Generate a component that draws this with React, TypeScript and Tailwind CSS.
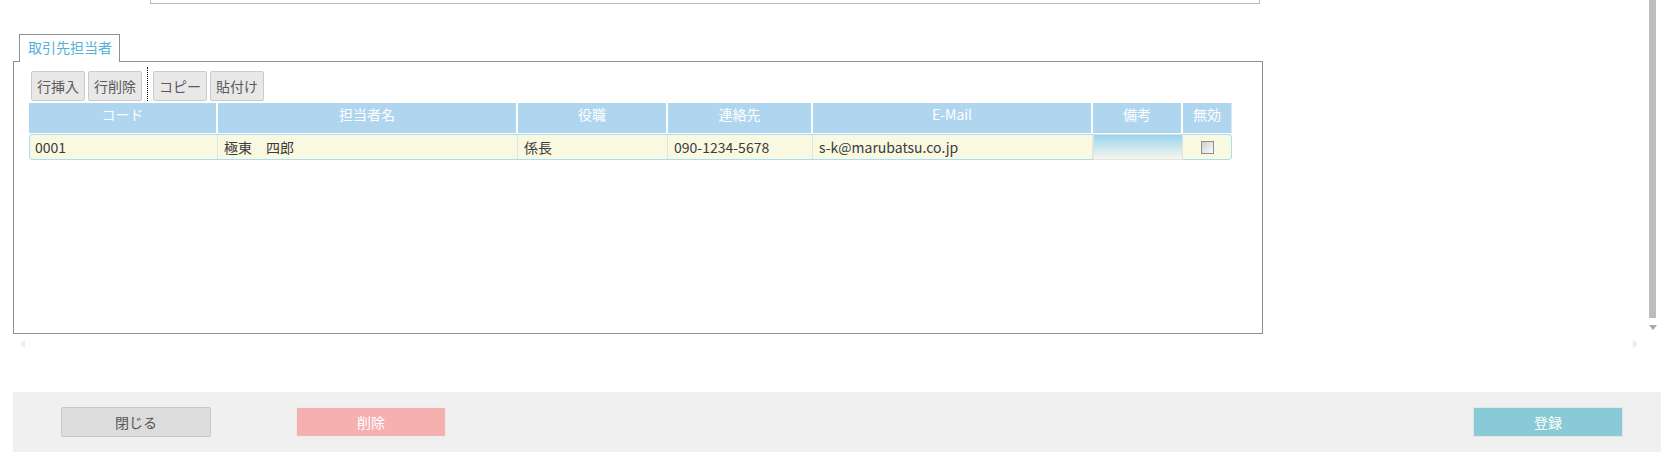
const columns = [
  { label: "コード", head: "w-[189px]", cell: "w-[188px] pl-[5px] border-r border-[#e3e6dc]", value: "0001" },
  { label: "担当者名", head: "w-[300px]", cell: "w-[300px] pl-[6px] border-r border-[#e3e6dc]", value: "極東　四郎" },
  { label: "役職", head: "w-[150px]", cell: "w-[150px] pl-[6px] border-r border-[#e3e6dc]", value: "係長" },
  { label: "連絡先", head: "w-[145px]", cell: "w-[145px] pl-[6px] border-r border-[#e3e6dc]", value: "090-1234-5678" },
  { label: "E-Mail", head: "w-[280px]", cell: "w-[280px] pl-[6px] border-r border-[#e3e6dc]", value: "s-k@marubatsu.co.jp" },
];

function ToolButton({ label }: { label: string }) {
  return (
    <button className="w-[54px] h-[30px] bg-[#e8e8e8] border border-[#cbcbcb] rounded-[2px] text-[14px] leading-[20px] text-[#5a5a5a]">
      {label}
    </button>
  );
}

function FooterButton({ label, className }: { label: string; className: string }) {
  return (
    <button className={"w-[150px] h-[30px] border text-[14px] leading-[20px] " + className}>
      {label}
    </button>
  );
}

export default function App() {
  return (
    <div className="w-[1668px] h-[458px] bg-white overflow-hidden font-['Noto_Sans_CJK_JP',sans-serif] text-[#444]">
      <div className="flex h-[392px]">
        <div className="w-[1649px]">
          {/* bottom edge of the field above */}
          <div className="ml-[150px] w-[1110px] h-[4px] border-x border-b border-[#bcbcbc]" />

          <div className="ml-[13px] mt-[30px]">
            <div className="relative z-10 ml-[6px] -mb-[1px] w-[101px] h-[28px] bg-white border-t border-x border-[#8f8f97] pl-[8px] pt-[2px] text-[14px] leading-[20px] text-[#52b2d6]">
              取引先担当者
            </div>

            <div className="w-[1250px] h-[273px] border border-[#8f8f97] pl-[15px] pt-[5px]">
              <div className="flex items-end ml-[2px]">
                <div className="flex gap-[3px]">
                  <ToolButton label="行挿入" />
                  <ToolButton label="行削除" />
                </div>
                <div className="h-[34px] ml-[5px] mr-[5px] border-l border-dotted border-black" />
                <div className="flex gap-[3px]">
                  <ToolButton label="コピー" />
                  <ToolButton label="貼付け" />
                </div>
              </div>

              <div className="mt-[2px] flex h-[30px] bg-[#b0d5ef] w-[1203px] text-white text-[14px] leading-[20px]">
                {columns.map((c) => (
                  <div key={c.label} className={c.head + " border-r-2 border-white text-center pt-[1px]"}>
                    {c.label}
                  </div>
                ))}
                <div className="w-[90px] border-r-2 border-white text-center pt-[1px]">備考</div>
                <div className="w-[49px] border-r border-[#dde6ee] text-center pt-[1px]">無効</div>
              </div>

              <div className="mt-[1px] flex h-[26px] w-[1203px] border border-[#a7dff2] rounded-[3px] bg-[#f9f8e1] text-[14px] leading-[20px] text-[#3c3c3c]">
                {columns.map((c) => (
                  <div key={c.label} className={c.cell + " flex items-center"}>
                    {c.value}
                  </div>
                ))}
                <div className="w-[90px] -my-[1px] border-x border-y border-[#e2e2e2] bg-linear-to-b from-[#98d4f0] to-[#f7f7ea]" />
                <div className="w-[48px] flex items-center justify-center">
                  <div className="w-[13px] h-[13px] border border-[#8e8e8e] bg-linear-to-br from-[#cfcfcf] to-[#fbfbfb]" />
                </div>
              </div>
            </div>
          </div>

          <div className="ml-[20px] mt-[6px] w-[1618px] flex justify-between">
            <div className="w-0 h-0 border-y-[4px] border-y-transparent border-r-[5px] border-r-[#ececec]" />
            <div className="w-0 h-0 border-y-[4px] border-y-transparent border-l-[5px] border-l-[#ececec]" />
          </div>
        </div>

        <div className="w-[7px] flex flex-col items-center">
          <div className="w-[7px] h-[318px] bg-[#bdbdbd]" />
          <div className="mt-[7px] w-0 h-0 border-x-[4px] border-x-transparent border-t-[5px] border-t-[#a8a8a8]" />
        </div>
      </div>

      <div className="ml-[13px] w-[1648px] h-[60px] bg-[#f0f0f0] flex items-center">
        <FooterButton label="閉じる" className="ml-[48px] bg-[#dcdcdc] border-[#c6c6c6] text-[#555] rounded-[2px]" />
        <FooterButton label="削除" className="ml-[85px] bg-[#f7b0b0] border-[#ececec] text-white" />
        <div className="flex-1" />
        <FooterButton label="登録" className="mr-[38px] bg-[#88cad6] border-[#e4e4e4] text-white" />
      </div>
    </div>
  );
}
